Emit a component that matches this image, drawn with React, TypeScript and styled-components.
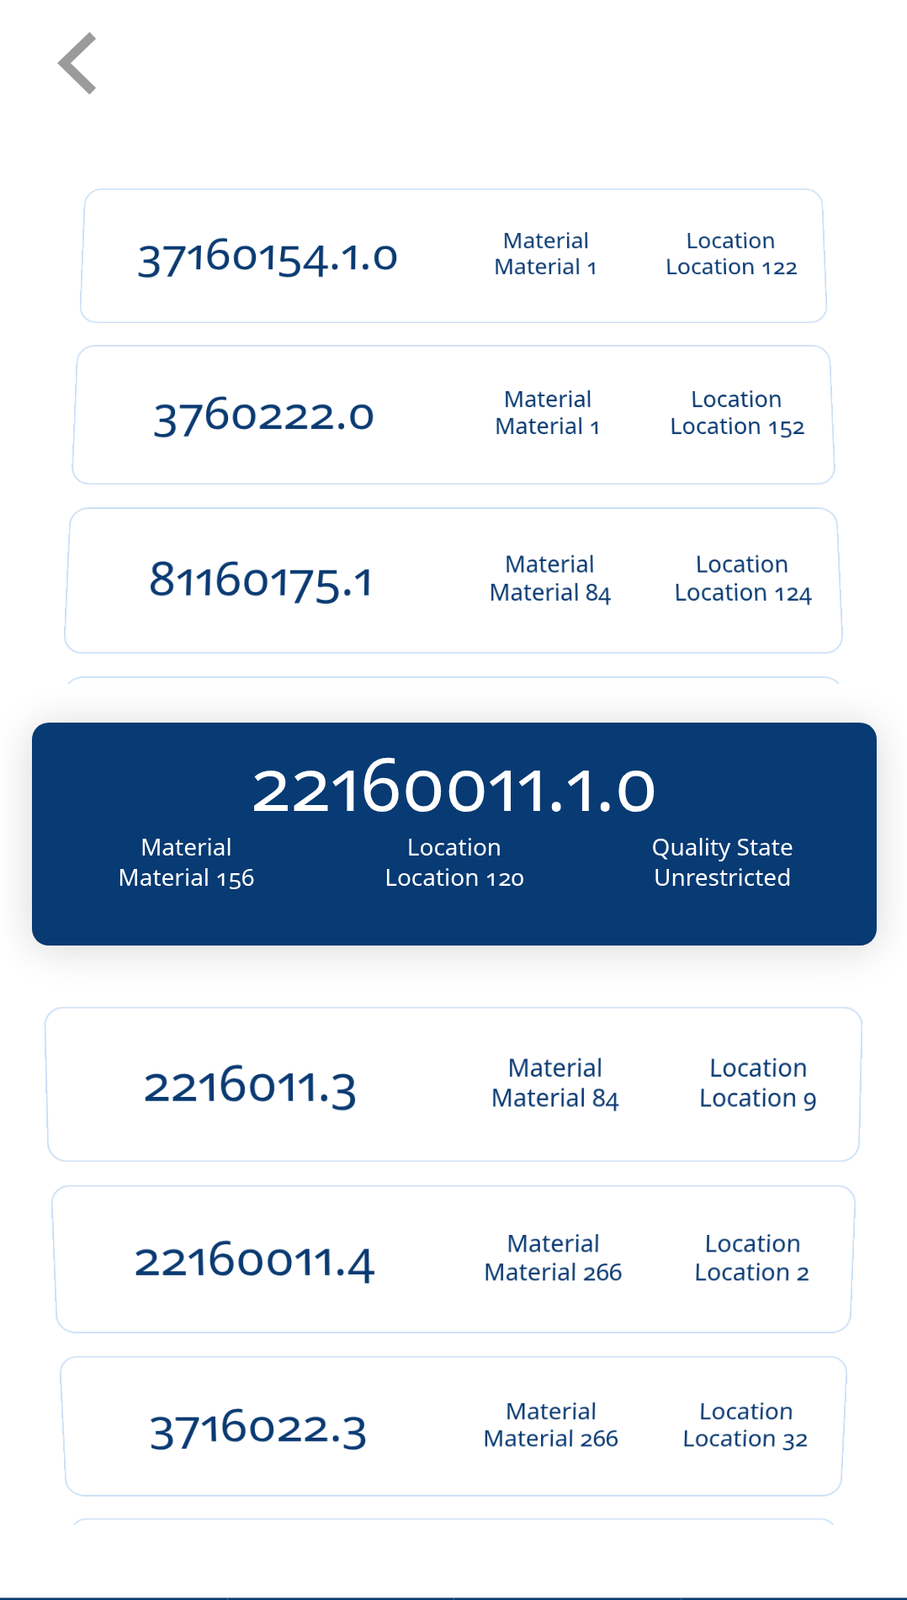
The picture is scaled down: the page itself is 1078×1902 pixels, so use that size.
import React from 'react';
import styled, { createGlobalStyle } from 'styled-components';

interface StockItem {
  id: string;
  material: string;
  location: string;
  sx: number;
  sy: number;
  tilt: number;
  dy: number;
  peek?: boolean;
}

const above: StockItem[] = [
  { id: '37160154.1.0', material: 'Material 1', location: 'Location 122', sx: 0.8835, sy: 0.8385, tilt: 5.3, dy: 0.5 },
  { id: '3760222.0', material: 'Material 1', location: 'Location 152', sx: 0.902, sy: 0.87, tilt: 5.4, dy: -8.5 },
  { id: '81160175.1', material: 'Material 84', location: 'Location 124', sx: 0.92, sy: 0.911, tilt: 5.7, dy: -9.5 },
  { id: '22160011.2', material: 'Material 156', location: 'Location 118', sx: 0.934, sy: 0.925, tilt: 6, dy: -5.5, peek: true },
];

const below: StockItem[] = [
  { id: '2216011.3', material: 'Material 84', location: 'Location 9', sx: 0.9695, sy: 0.9635, tilt: -2.9, dy: -1.5 },
  { id: '22160011.4', material: 'Material 266', location: 'Location 2', sx: 0.951, sy: 0.922, tilt: -4.9, dy: 8.5 },
  { id: '3716022.3', material: 'Material 266', location: 'Location 32', sx: 0.93, sy: 0.875, tilt: -6.1, dy: 9 },
  { id: '37160022.1', material: 'Material 12', location: 'Location 40', sx: 0.906, sy: 0.85, tilt: -6.5, dy: 1.5, peek: true },
];

const selected = {
  id: '22160011.1.0',
  material: 'Material 156',
  location: 'Location 120',
  quality: 'Unrestricted',
};

export default function App() {
  return (
    <>
      <GlobalStyle />
      <Page>
        <Header>
          <BackButton aria-label="Back">
            <svg width="60" height="90" viewBox="0 0 60 90">
              <polyline
                points="50.3,12 16,45 50.3,78.5"
                fill="none"
                stroke="#9b9b9b"
                strokeWidth="11"
                strokeLinecap="butt"
                strokeLinejoin="miter"
              />
            </svg>
          </BackButton>
        </Header>

        <Wheel $height={663} $padTop={57}>
          {above.map((item) => (
            <WheelCard key={item.id} item={item} />
          ))}
        </Wheel>

        <SelectedZone>
          <Selected>
            <SelectedId>{selected.id}</SelectedId>
            <SelectedGrid>
              <Field>
                <span>Material</span>
                <span>{selected.material}</span>
              </Field>
              <Field>
                <span>Location</span>
                <span>{selected.location}</span>
              </Field>
              <Field>
                <span>Quality State</span>
                <span>{selected.quality}</span>
              </Field>
            </SelectedGrid>
          </Selected>
        </SelectedZone>

        <Wheel $height={618} $padTop={0}>
          {below.map((item) => (
            <WheelCard key={item.id} item={item} />
          ))}
        </Wheel>

        <Spacer />

        <TabBar>
          <Tab />
          <Tab />
          <Tab />
          <Tab />
        </TabBar>
      </Page>
    </>
  );
}

function WheelCard({ item }: { item: StockItem }) {
  // cards that only peek out from under the mask show just their frame
  return (
    <Card $sx={item.sx} $sy={item.sy} $tilt={item.tilt} $dy={item.dy}>
      {!item.peek && (
        <>
          <CardId>{item.id}</CardId>
          <CardField>
            <span>Material</span>
            <span>{item.material}</span>
          </CardField>
          <CardField>
            <span>Location</span>
            <span>{item.location}</span>
          </CardField>
        </>
      )}
    </Card>
  );
}

const GlobalStyle = createGlobalStyle`
  html, body {
    margin: 0;
    padding: 0;
    background: #ffffff;
  }
  body {
    font-family: 'Noto Sans', 'Open Sans', sans-serif;
  }
`;

const Page = styled.div`
  width: 1078px;
  height: 1902px;
  overflow: hidden;
  background: #ffffff;
  color: #0a3a72;
`;

const Header = styled.div`
  height: 150px;
  padding: 30px 0 0 60px;
  box-sizing: border-box;
`;

const BackButton = styled.button`
  display: block;
  padding: 0;
  border: none;
  background: none;
  cursor: pointer;
  line-height: 0;
`;

const Wheel = styled.div<{ $height: number; $padTop: number }>`
  height: ${(p) => p.$height}px;
  padding-top: ${(p) => p.$padTop}px;
  box-sizing: border-box;
  overflow: hidden;
  display: flex;
  flex-direction: column;
  align-items: center;
  gap: 6px;
`;

const Card = styled.div<{ $sx: number; $sy: number; $tilt: number; $dy: number }>`
  flex-shrink: 0;
  width: 1000px;
  height: 192px;
  box-sizing: border-box;
  border: 2px solid #cde1f6;
  border-radius: 24px;
  background: #ffffff;
  display: grid;
  grid-template-columns: 2fr 1fr 1fr;
  align-items: center;
  transform: perspective(1000px) translateY(${(p) => p.$dy}px) rotateX(${(p) => p.$tilt}deg)
    scale(${(p) => p.$sx}, ${(p) => p.$sy});
`;

const CardId = styled.div`
  text-align: center;
  font-size: 62px;
  line-height: 62px;
  font-stretch: condensed;
  font-variant-numeric: oldstyle-nums proportional-nums;
  padding-bottom: 8px;
`;

const CardField = styled.div`
  display: flex;
  flex-direction: column;
  align-items: center;
  font-size: 30px;
  line-height: 37px;
  font-variant-numeric: oldstyle-nums;
  padding-bottom: 6px;
  white-space: nowrap;
`;

const SelectedZone = styled.div`
  position: relative;
  z-index: 2;
  height: 382px;
  padding: 46px 0 0 38px;
  box-sizing: border-box;
`;

const Selected = styled.div`
  width: 1004px;
  height: 265px;
  box-sizing: border-box;
  padding-top: 28px;
  border-radius: 20px;
  background: #083a73;
  color: #ffffff;
  box-shadow: 0 4px 50px rgba(0, 0, 0, 0.16);
  display: flex;
  flex-direction: column;
  align-items: center;
`;

const SelectedId = styled.div`
  font-size: 87px;
  line-height: 87px;
  font-stretch: condensed;
  font-variant-numeric: oldstyle-nums proportional-nums;
`;

const SelectedGrid = styled.div`
  align-self: stretch;
  margin-top: 14px;
  padding: 0 24px;
  display: grid;
  grid-template-columns: repeat(3, 1fr);
`;

const Field = styled.div`
  display: flex;
  flex-direction: column;
  align-items: center;
  font-size: 28px;
  line-height: 36px;
  font-variant-numeric: oldstyle-nums;
  white-space: nowrap;
`;

const Spacer = styled.div`
  height: 86px;
`;

const TabBar = styled.nav`
  height: 90px;
  display: grid;
  grid-template-columns: repeat(4, 1fr);
  background: #0a3a72;
  border-top: 1px solid #6f88a8;
`;

const Tab = styled.div`
  & + & {
    border-left: 1px solid #4b6d96;
  }
`;
